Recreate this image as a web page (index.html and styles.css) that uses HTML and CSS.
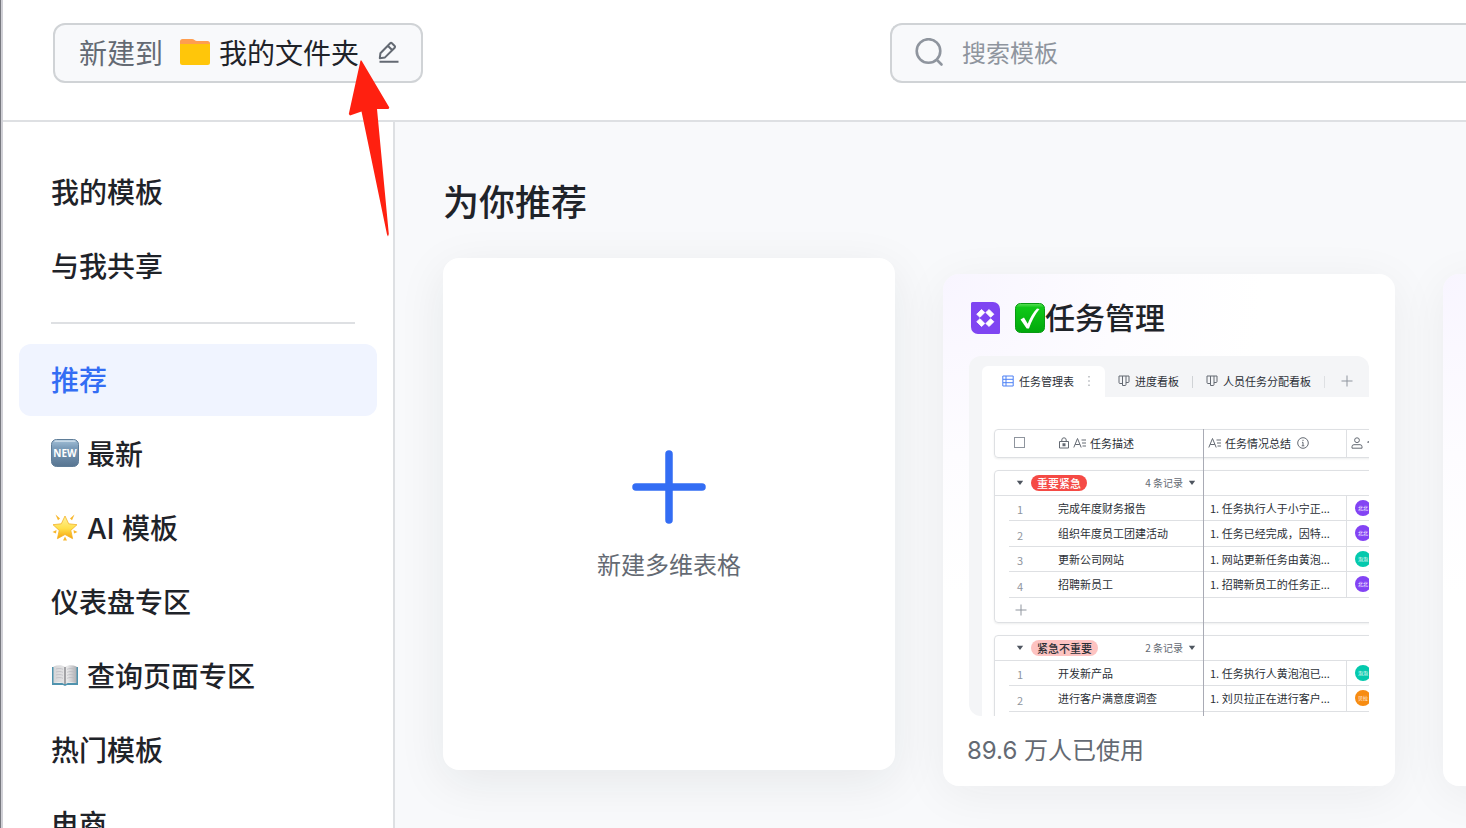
FILE: index.html
```html
<!DOCTYPE html>
<html lang="zh-CN">
<head>
<meta charset="utf-8">
<title>模板中心</title>
<link rel="stylesheet" href="styles.css">
</head>
<body>
<svg class="defs" width="0" height="0" aria-hidden="true">
  <defs>
    <linearGradient id="gNew" x1="0" y1="0" x2="0" y2="1"><stop offset="0" stop-color="#a3c0d8"/><stop offset=".3" stop-color="#7c9dba"/><stop offset="1" stop-color="#587591"/></linearGradient>
    <linearGradient id="gStar" x1="0" y1="0" x2="0" y2="1"><stop offset="0" stop-color="#fff3a0"/><stop offset=".55" stop-color="#ffdf4a"/><stop offset="1" stop-color="#f5a40c"/></linearGradient>
    <linearGradient id="gCheck" x1="0" y1="0" x2="0" y2="1"><stop offset="0" stop-color="#5fe05a"/><stop offset=".14" stop-color="#10c818"/><stop offset="1" stop-color="#00a80c"/></linearGradient>
    <linearGradient id="gPage" x1="0" y1="0" x2="1" y2="0"><stop offset="0" stop-color="#d4d4d6"/><stop offset=".6" stop-color="#e9e9ea"/><stop offset="1" stop-color="#b0b0b4"/></linearGradient>
    <symbol id="kanban" viewBox="0 0 12 12"><path d="M1 1h10v5.500a1 1 0 0 1-1 1H8M1 1v6.500a1 1 0 0 0 1 1h2.500M4.500 1v9.500H7a1 1 0 0 0 1-1V1" fill="none" stroke="#646a73" stroke-width="1"/></symbol>
    <symbol id="atext" viewBox="0 0 14 12"><path d="M.8 10.500 4.500 1.500 8.200 10.500M2.200 7.500h4.600M8.500 3H13M9 6h4M9.500 9H13" fill="none" stroke="#646a73" stroke-width="1"/></symbol>
    <symbol id="caret" viewBox="0 0 8 6"><path d="M.8.8h6.400L4 5z" fill="#4e555f"/></symbol>
    <symbol id="plus" viewBox="0 0 12 12"><path d="M6 .5v11M.5 6h11" fill="none" stroke="#8f959e" stroke-width="1"/></symbol>
  </defs>
</svg>
<div class="window">
  <header class="topbar">
    <button class="location" type="button">
      <span class="location-label">新建到</span>
      <svg class="folder" viewBox="0 0 30 26"><path d="M0 2.500A2.500 2.500 0 0 1 2.500 0H12c2 0 3 2 5 2h10.500A2.500 2.500 0 0 1 30 4.500V12H0z" fill="#ff9e4f"/><path d="M0 5h30v18.500a2.500 2.500 0 0 1-2.500 2.500h-25A2.500 2.500 0 0 1 0 23.500z" fill="#ffc60a"/></svg>
      <span class="location-name">我的文件夹</span>
      <svg class="edit" viewBox="0 0 22 22" fill="none" stroke="#646a73" stroke-width="2" stroke-linejoin="round"><path d="M2.800 17.200 3.400 12.300 13.200 2.200a1.200 1.200 0 0 1 1.700 0L17.700 5a1.200 1.200 0 0 1 0 1.700L8 16.400zM10.800 4.700l4.300 4.300M2.500 20.800h19"/></svg>
    </button>
    <label class="search">
      <svg viewBox="0 0 30 30" fill="none" stroke="#8f959e" stroke-width="2.600" stroke-linecap="round"><circle cx="14.500" cy="13" r="11.800"/><path d="m23 22 4.500 4.500"/></svg>
      <input type="text" placeholder="搜索模板" aria-label="搜索模板">
    </label>
  </header>
  <div class="body">
    <nav class="sidebar">
      <a class="item" href="#">我的模板</a>
      <a class="item" href="#">与我共享</a>
      <hr class="divider">
      <a class="item active" href="#" aria-current="page">推荐</a>
      <a class="item" href="#"><svg viewBox="0 0 28 28"><rect x=".5" y=".5" width="27" height="27" rx="5" fill="url(#gNew)" stroke="#5f7d98"/><path d="M4 2.200h20" stroke="#d5e3ee" stroke-width="1.200" stroke-linecap="round"/><text x="14" y="18" class="new-text">NEW</text></svg><span>最新</span></a>
      <a class="item" href="#"><svg viewBox="0 0 28 28"><path d="m14 3 3.700 7.800 8.300.9-6.200 5.700 1.800 8.300-7.600-4.200-7.600 4.200 1.800-8.300L2 11.700l8.300-.9z" fill="url(#gStar)" stroke="#f3b32a" stroke-width=".8" stroke-linejoin="round"/><path d="m4.500 1.500 4.500 4-2 1.800zM23.500 1.500 19 5.500l2 1.800zM1.500 19l4-2-.5 3.500zM26.500 19l-4-2 .5 3.500zM14 23.500l2 4h-4z" fill="#f8b62a"/></svg><span>AI 模板</span></a>
      <a class="item" href="#">仪表盘专区</a>
      <a class="item" href="#"><svg viewBox="0 0 28 28"><path d="M1 6h2v16h9l2 1 2-1h9V6h2v18H16l-2 1-2-1H1z" fill="#4f93ae"/><path d="M2.500 5.500C7 3.500 11.500 4 14 6c2.500-2 7-2.500 11.500-.5V22c-4.500-1-9-.5-11.500 1-2.500-1.500-7-2-11.500-1z" fill="url(#gPage)"/><path d="M14 6v17" stroke="#77777c" stroke-width="1.200"/><path d="M5 8c3-.8 5-.5 7 .3M5 11c3-.8 5-.5 7 .3M5 14c3-.8 5-.5 7 .3M5 17c3-.8 5-.5 7 .3M16 8.300c2-.8 4-1.100 7-.3M16 11.300c2-.8 4-1.100 7-.3M16 14.300c2-.8 4-1.100 7-.3M16 17.300c2-.8 4-1.100 7-.3" fill="none" stroke="#b8b8bd" stroke-width=".7"/></svg><span>查询页面专区</span></a>
      <a class="item" href="#">热门模板</a>
      <a class="item" href="#">电商</a>
    </nav>
    <main class="content">
      <h1>为你推荐</h1>
      <div class="cards">
        <button class="card create" type="button">
          <svg viewBox="0 0 74 74"><path d="M37 4v66M4 37h66" stroke="#336df4" stroke-width="7.500" stroke-linecap="round"/></svg>
          <span>新建多维表格</span>
        </button>
        <article class="card template">
          <h2>
            <svg class="app" viewBox="0 0 29 32"><path d="M1.500 0H22a7 7 0 0 1 7 7v23.500a1.500 1.500 0 0 1-1.500 1.500H7a7 7 0 0 1-7-7V1.500A1.500 1.500 0 0 1 1.500 0z" fill="#7f45f2"/><path d="M10.500 7.500 13.800 10.500 9 15.300 5.700 12.300zM18.100 7.500 14.800 10.500 19.600 15.300 22.900 12.300zM10.500 24.500 13.800 21.500 9 16.700 5.700 19.700zM18.100 24.500 14.800 21.500 19.600 16.700 22.900 19.700z" fill="#fff" stroke="#fff" stroke-width=".8" stroke-linejoin="round"/></svg>
            <svg class="check" viewBox="0 0 30 30"><rect x=".5" y=".5" width="29" height="29" rx="5" fill="url(#gCheck)" stroke="#0a9a14"/><path d="M5.500 16.500 9 14.500l3.700 6.300C15 15 18 9.500 22 5.500l2.500.5c-4.500 5.500-8 12-10.500 19.500h-2.300z" fill="#fff"/></svg><span>任务管理</span>
          </h2>
          <div class="preview">
            <div class="tabs">
              <span class="tab current"><svg viewBox="0 0 12 12" fill="none" stroke="#4c80f5"><path d="M.8 1h10.400v10H.8zM4 1v10M4 4.300h7M4 7.700h7M1 4.300h3M1 7.700h3"/></svg>任务管理表<svg class="dots" viewBox="0 0 4 12"><path d="M2 1v1.500M2 5.200v1.500M2 9.500V11" stroke="#a0a4aa" stroke-width="1.200"/></svg></span>
              <span class="tab"><svg><use href="#kanban"/></svg>进度看板</span>
              <span class="tab last"><svg><use href="#kanban"/></svg>人员任务分配看板</span>
              <span class="tab add"><svg><use href="#plus"/></svg></span>
            </div>
            <div class="sheet">
              <table class="grid head">
                <colgroup><col class="c0"><col class="c1"><col class="c2"><col class="c3"><col class="c4"></colgroup>
                <tr><th></th><th><span class="box"></span></th>
                  <th><span class="th"><svg class="lock" viewBox="0 0 12 12" fill="none" stroke="#646a73"><path d="M1.500 4.500h9V11h-9zM3.800 4.500V3a2.200 2.200 0 0 1 4.400 0v1.500"/><path d="M4.500 6.300h3v3h-3z" fill="#646a73" stroke="none"/></svg><svg class="a"><use href="#atext"/></svg>任务描述</span></th>
                  <th class="sum"><span class="th"><svg class="a"><use href="#atext"/></svg>任务情况总结<svg class="info" viewBox="0 0 12 12" fill="none" stroke="#646a73"><circle cx="6" cy="6" r="5.300"/><path d="M6 2.800V4M5 5.300h1v3.500M4.700 8.800h2.600"/></svg></span></th>
                  <th class="who"><svg viewBox="0 0 18 12" fill="none" stroke="#646a73"><circle cx="6" cy="3.200" r="2.400"/><path d="M1 11.200V9.700a2 2 0 0 1 2-2h6a2 2 0 0 1 2 2v1.500z"/><path d="M16.500 5.500 18 4.500" stroke-width="1.500"/></svg></th></tr>
              </table>
              <table class="grid">
                <colgroup><col class="c0"><col class="c1"><col class="c2"><col class="c3"><col class="c4"></colgroup>
                <tr class="group"><td></td><td colspan="2"><div class="group-row"><svg><use href="#caret"/></svg><span class="tag red">重要紧急</span><span class="count">4 条记录</span><svg><use href="#caret"/></svg></div></td><td></td><td></td></tr>
                <tr><td></td><td class="no">1</td><td>完成年度财务报告</td><td class="sum">1. 任务执行人于小宁正...</td><td class="who"><span class="avatar violet">北北</span></td></tr>
                <tr><td></td><td class="no">2</td><td>组织年度员工团建活动</td><td class="sum">1. 任务已经完成，因特...</td><td class="who"><span class="avatar violet">北北</span></td></tr>
                <tr><td></td><td class="no">3</td><td>更新公司网站</td><td class="sum">1. 网站更新任务由黄泡...</td><td class="who"><span class="avatar teal">泡泡</span></td></tr>
                <tr><td></td><td class="no">4</td><td>招聘新员工</td><td class="sum">1. 招聘新员工的任务正...</td><td class="who"><span class="avatar violet">北北</span></td></tr>
                <tr class="more"><td></td><td class="no"><svg><use href="#plus"/></svg></td><td></td><td></td><td></td></tr>
              </table>
              <table class="grid">
                <colgroup><col class="c0"><col class="c1"><col class="c2"><col class="c3"><col class="c4"></colgroup>
                <tr class="group"><td></td><td colspan="2"><div class="group-row"><svg><use href="#caret"/></svg><span class="tag pink">紧急不重要</span><span class="count">2 条记录</span><svg><use href="#caret"/></svg></div></td><td></td><td></td></tr>
                <tr><td></td><td class="no">1</td><td>开发新产品</td><td class="sum">1. 任务执行人黄泡泡已...</td><td class="who"><span class="avatar teal">泡泡</span></td></tr>
                <tr><td></td><td class="no">2</td><td>进行客户满意度调查</td><td class="sum">1. 刘贝拉正在进行客户...</td><td class="who"><span class="avatar orange">贝拉</span></td></tr>
                <tr class="more"><td></td><td></td><td></td><td></td><td></td></tr>
              </table>
            </div>
          </div>
          <p class="used">89.6 万人已使用</p>
        </article>
        <article class="card template"></article>
      </div>
    </main>
  </div>
</div>
<svg class="pointer" viewBox="0 0 42 178" aria-hidden="true"><path d="M13.500 1.500 41.300 48.500 40.500 50 29 50 40.800 175 40 177.500 39 175.500 13.500 52.500 2 56.500 .8 55 12.500 1.500z" fill="#ff2010"/></svg>
</body>
</html>
```
FILE: styles.css
```css
* { box-sizing: border-box; }

body {
  margin: 0;
  height: 100vh;
  overflow: hidden;
  background: #fff;
  color: #1f2329;
  font-family: Inter, "Noto Sans CJK SC", sans-serif;
  font-size: 28px;
  border-left: 1px solid #77787f;
}

svg { display: block; flex: none; }
.defs { position: absolute; }
button, input { font: inherit; color: inherit; }

.window {
  height: 100%;
  display: flex;
  flex-direction: column;
  border-left: 2px solid #d0d0d6;
}

.topbar {
  flex: none;
  height: 122px;
  display: flex;
  justify-content: space-between;
  align-items: flex-start;
  padding: 23px 0 0 50px;
  border-bottom: 2px solid #dee0e3;
}

.location {
  height: 60px;
  display: flex;
  align-items: center;
  padding: 0 22px 2px 24px;
  border: 2px solid #d0d3d6;
  border-radius: 12px;
  background: #f8f9fb;
}
.location-label { color: #646a73; margin-right: 17px; }
.folder { width: 30px; height: 26px; margin-right: 9px; }
.location-name { margin-right: 18px; }
.edit { width: 22px; height: 22px; }

.search {
  width: 576px;
  height: 60px;
  display: flex;
  align-items: center;
  gap: 18px;
  padding-left: 22px;
  border: 2px solid #d0d3d6;
  border-right: 0;
  border-radius: 12px 0 0 12px;
  background: #f8f9fb;
}
.search svg { width: 30px; height: 30px; }
.search input {
  flex: 1;
  min-width: 0;
  padding: 0;
  border: 0;
  outline: 0;
  background: none;
  font-size: 24px;
}
.search input::placeholder { color: #8f959e; opacity: 1; }

.body { flex: 1; min-height: 0; display: flex; }

.sidebar {
  flex: none;
  width: 392px;
  padding: 34px 16px 0;
  display: flex;
  flex-direction: column;
  gap: 2px;
  overflow: hidden;
  border-right: 2px solid #dee0e3;
}
.item {
  flex: none;
  height: 72px;
  display: flex;
  align-items: center;
  gap: 8px;
  padding: 0 32px 2px;
  border-radius: 12px;
  color: #1f2329;
  font-weight: 500;
  text-decoration: none;
}
.item svg { width: 28px; height: 28px; }
.active { background: #f0f4ff; color: #336df4; }
.divider {
  flex: none;
  width: 304px;
  height: 2px;
  margin: 18px 0 18px 32px;
  border: 0;
  background: #dee0e3;
}
.new-text { font: 700 10px "Open Sans", sans-serif; fill: #fff; text-anchor: middle; }

.content {
  flex: 1;
  min-width: 0;
  padding: 55px 0 0 48px;
  overflow: hidden;
  background: #f8f9fb;
}
h1 { margin: 0; font-size: 36px; line-height: 52px; font-weight: 500; }

.cards { display: flex; align-items: flex-start; gap: 48px; margin-top: 29px; }
.card {
  flex: none;
  width: 452px;
  height: 512px;
  border: 0;
  border-radius: 16px;
  background: #fff;
  box-shadow: 0 8px 48px rgba(31, 35, 41, .06);
}
.create {
  display: flex;
  flex-direction: column;
  align-items: center;
  justify-content: center;
  gap: 22px;
  padding-top: 4px;
  color: #646a73;
  font-size: 24px;
  box-shadow: 0 12px 48px rgba(31, 35, 41, .08);
}
.create svg { width: 74px; height: 74px; }
.template {
  margin-top: 16px;
  padding: 24px 24px 24px 26px;
  background: radial-gradient(circle at 0 0, #f8f5ff 0, #fdfcff 180px, #fff 320px);
}
h2 {
  display: flex;
  align-items: center;
  height: 40px;
  margin: 0 0 18px;
  padding-left: 2px;
  font-size: 30px;
  line-height: 36px;
  font-weight: 500;
}
.app { width: 29px; height: 32px; margin-right: 15px; }
.check { width: 30px; height: 30px; }
.used { margin: 17px 0 0 -2px; color: #646a73; font-size: 24px; line-height: 36px; }

.preview {
  width: 400px;
  height: 360px;
  padding: 10px 0 0 13px;
  overflow: hidden;
  border-radius: 12px 12px 0 12px;
  background: #f4f5f7;
  color: #2b2f36;
  font-family: "Noto Sans CJK SC", sans-serif;
  font-size: 11px;
  line-height: 16px;
}
.tabs { display: flex; height: 31px; align-items: center; }
.tab { display: flex; align-items: center; gap: 5px; padding: 0 0 2px 13px; font-weight: 400; }
.tab svg { width: 12px; height: 12px; }
.tab:nth-child(2) { padding-right: 14px; background: linear-gradient(#d0d3d6, #d0d3d6) right center / 1px 12px no-repeat; }
.tab.last { padding-right: 14px; background: linear-gradient(#dee0e3, #dee0e3) right center / 1px 12px no-repeat; }
.tab.add { padding-left: 16px; }
.current {
  width: 123px;
  height: 31px;
  padding-left: 20px;
  border-radius: 6px 6px 0 0;
  background: #fff;
}
.current .dots { width: 4px; margin-left: 8px; }

.sheet {
  position: relative;
  height: 319px;
  padding: 32px 0 0 12px;
  overflow: hidden;
  background: #fff;
}
.sheet::after {
  content: "";
  position: absolute;
  top: 32px;
  bottom: 0;
  left: 221px;
  width: 1px;
  background: #a9abb5;
}
.grid {
  width: 400px;
  table-layout: fixed;
  border-spacing: 0;
  margin-bottom: 12px;
  border: 1px solid #dee0e3;
  border-radius: 4px;
  box-shadow: 0 1px 2px rgba(31, 35, 41, .08);
}
.grid th, .grid td {
  height: 25px;
  padding: 0 0 1px;
  border-bottom: 1px solid #dee0e3;
  text-align: left;
  font-weight: 400;
  line-height: 16px;
  white-space: nowrap;
}
.grid tr:nth-child(odd) td { height: 26px; }
.grid tr.group td { height: 25px; padding: 0; }
.grid th { height: 27px; padding-bottom: 2px; border: 0; }
.grid td:first-child { border-bottom-color: transparent; }
.grid .group td:first-child { border-bottom-color: #dee0e3; }
.grid tr.more td { height: 24px; border-bottom: 0; }
.c0 { width: 14px; }
.c1 { width: 49px; }
.c2 { width: 146px; }
.c3 { width: 142px; }
.grid .sum { padding-left: 6px; }
.grid th.sum { padding-left: 4px; }
.grid .who { border-left: 1px solid #dee0e3; padding-left: 8px; }
.grid th.who { padding-left: 4px; }
.who svg { width: 18px; height: 12px; }
.grid .no { padding: 2px 0 0 8px; color: #8f959e; }
.grid .more .no { padding: 0 0 0 6px; }
.no svg { width: 12px; height: 12px; }
.box { display: block; width: 11px; height: 11px; margin-left: 5px; border: 1px solid #8f959e; }
.th { display: flex; align-items: center; gap: 3px; }
.lock, .info { width: 12px; height: 12px; }
.a { width: 14px; height: 12px; }
.info { margin-left: 3px; }
.group-row { display: flex; align-items: center; padding: 0 8px 0 7px; }
.group-row svg { width: 8px; height: 6px; }
.tag { margin-left: 7px; padding: 0 6px; border-radius: 8px; font-weight: 500; }
.red { background: #f54a45; color: #fff; }
.pink { background: #fdc3c1; }
.count { margin: 0 5px 0 auto; color: #646a73; font-size: 10px; }
.avatar {
  display: block;
  width: 16px;
  height: 16px;
  border-radius: 50%;
  color: #fff;
  font-size: 5px;
  text-align: center;
}
.violet { background: #8343f4; }
.teal { background: #04c9ad; }
.orange { background: #f78c12; }

.pointer {
  position: absolute;
  left: 348px;
  top: 59px;
  width: 42px;
  height: 178px;
}
```
